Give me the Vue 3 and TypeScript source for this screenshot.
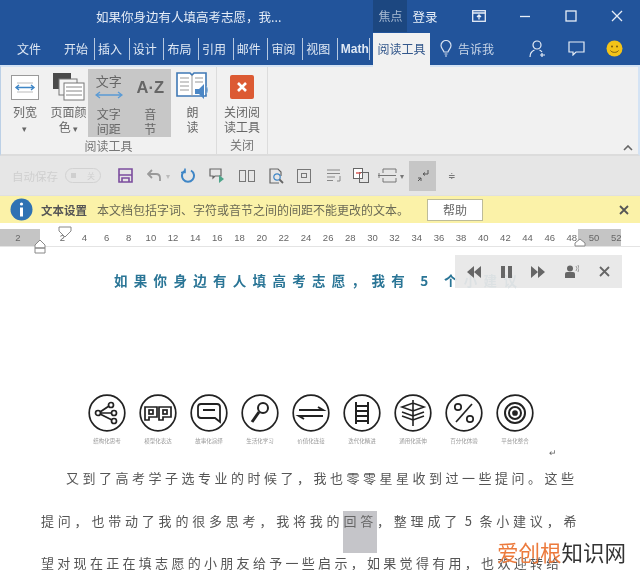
<script setup lang="ts">
const tabs = ['开始', '插入', '设计', '布局', '引用', '邮件', '审阅', '视图', 'Math']
const rulerMarks = ['2', '', ...Array.from({ length: 26 }, (_, i) => String((i + 1) * 2))]
const skills = ['结构化思考', '模型化表达', '故事化演绎', '生活化学习', '价值化连接', '迭代化精进', '通用化延伸', '百分化体验', '平台化整合']
</script>

<template>
  <div class="window">
    <header class="titlebar">
      <div class="doc-name">如果你身边有人填高考志愿，我...</div>
      <div class="focus">焦点</div>
      <div class="login">登录</div>
      <div class="win-btn first">
        <svg width="14" height="12" viewBox="0 0 14 12" fill="none" stroke="#e8eef7" stroke-width="1.3"><rect x=".7" y=".7" width="12.6" height="10.6"/><path d="M.7 3h12.6M7 9.5V5M5 7l2-2 2 2"/></svg>
      </div>
      <div class="win-btn"><svg width="12" height="12" viewBox="0 0 12 12" stroke="#e8eef7" stroke-width="1.3"><path d="M1 6.5h10"/></svg></div>
      <div class="win-btn"><svg width="12" height="12" viewBox="0 0 12 12" fill="none" stroke="#e8eef7" stroke-width="1.3"><rect x="1" y="1" width="10" height="10"/></svg></div>
      <div class="win-btn"><svg width="12" height="12" viewBox="0 0 12 12" stroke="#e8eef7" stroke-width="1.3"><path d="M1 1l10 10M11 1L1 11"/></svg></div>
    </header>

    <nav class="tabbar">
      <div class="file-tab">文件</div>
      <div class="tabs">
        <div v-for="t in tabs" :key="t" class="tab">{{ t }}</div>
      </div>
      <div class="active-tab">阅读工具</div>
      <div class="tell">
        <svg width="12" height="17" viewBox="0 0 12 17" fill="none" stroke="#d5e0f0" stroke-width="1.2"><path d="M4 12C3.500 9.500 1 8.500 1 5.500a5 5 0 0 1 10 0C11 8.500 8.500 9.500 8 12zM4.500 14h3M5 16h2"/></svg>
        <span>告诉我</span>
      </div>
      <div class="tab-icons">
        <svg width="18" height="18" viewBox="0 0 18 18" fill="none" stroke="#e8eef7" stroke-width="1.2"><circle cx="8" cy="5" r="4"/><path d="M1 17c0-4 2-6 4.500-7M10.500 10c1 .4 1.800 1 2.500 2M13 13v4M11 15h5"/></svg>
        <svg width="17" height="15" viewBox="0 0 17 15" fill="none" stroke="#e8eef7" stroke-width="1.2"><path d="M1 1h15v10H8l-3 3v-3H1z"/></svg>
        <svg width="17" height="17" viewBox="0 0 17 17"><circle cx="8.500" cy="8.500" r="8" fill="#f3c318"/><circle cx="6" cy="6.500" r="1" fill="#7a5a10"/><circle cx="11" cy="6.500" r="1" fill="#7a5a10"/><path d="M4.500 10.500c1.500 2.500 6.500 2.500 8 0" fill="none" stroke="#7a5a10"/></svg>
      </div>
    </nav>

    <section class="ribbon">
      <div class="group reading">
        <div class="cmds">
          <div class="cmd w-col">
            <svg width="28" height="25" viewBox="0 0 28 25"><rect x=".5" y=".5" width="27" height="24" fill="#fff" stroke="#9a9a9a"/><path d="M6 8h16M6 17h16" stroke="#bbb"/><path d="M5 12.500h18M8 10l-3 2.500L8 15M20 10l3 2.500-3 2.500" fill="none" stroke="#3f86c6" stroke-width="1.400"/></svg>
            <span class="lbl">列宽<br /><i class="caret">▾</i></span>
          </div>
          <div class="cmd w-color">
            <svg width="32" height="28" viewBox="0 0 32 28"><rect x="0" y="0" width="18" height="16" fill="#4a4a4a"/><rect x="6" y="6" width="18" height="16" fill="#f4f4f4" stroke="#777"/><rect x="11" y="10" width="20" height="17" fill="#fff" stroke="#777"/><path d="M13 14h16M13 18h16M13 22h16" stroke="#888"/></svg>
            <span class="lbl">页面颜<br />色 <i class="caret">▾</i></span>
          </div>
          <div class="selected">
            <div class="cmd w-sel">
              <div class="glyph-wrap">
                <span class="glyph">文字</span>
                <svg width="28" height="8" viewBox="0 0 28 8" fill="none" stroke="#5b9bd5" stroke-width="1.300"><path d="M1 4h26M5 1L1 4l4 3M23 1l4 3-4 3"/></svg>
              </div>
              <span class="lbl">文字<br />间距</span>
            </div>
            <div class="cmd w-sel">
              <div class="az">A·Z</div>
              <span class="lbl">音<br />节</span>
            </div>
          </div>
          <div class="cmd w-read">
            <svg width="33" height="30" viewBox="0 0 33 30"><path d="M1 2h13l2 2 2-2h12v23H1z" fill="#fff" stroke="#3f78b5" stroke-width="1.600"/><path d="M16 4v21M4 7h9M4 11h9M4 15h9M4 19h9M19 7h8M19 11h8" stroke="#999"/><path d="M19 18h4l5-5v15l-5-5h-4z" fill="#4a86c5"/><path d="M30 15c2 2 2 6 0 8" fill="none" stroke="#7fb0dc"/></svg>
            <span class="lbl">朗<br />读</span>
          </div>
        </div>
        <div class="group-name">阅读工具</div>
      </div>
      <div class="group closing">
        <div class="cmds">
          <div class="cmd w-close">
            <svg width="24" height="24" viewBox="0 0 24 24"><rect width="24" height="24" rx="2" fill="#dc5a33"/><path d="M8 8l8 8M16 8l-8 8" stroke="#fff" stroke-width="2.600"/></svg>
            <span class="lbl">关闭阅<br />读工具</span>
          </div>
        </div>
        <div class="group-name">关闭</div>
      </div>
      <svg class="collapse" width="10" height="6" viewBox="0 0 10 6" fill="none" stroke="#666" stroke-width="1.600"><path d="M1 5l4-4 4 4"/></svg>
    </section>

    <section class="toolbar">
      <span class="autosave">自动保存</span>
      <span class="toggle"><i></i><b>关</b></span>
      <svg class="t-save" width="15" height="15" viewBox="0 0 15 15" fill="none" stroke="#7c4d9e" stroke-width="1.600"><path d="M1 1h13v13H1zM1 7h13M4 14v-4h7v4"/></svg>
      <svg class="t-undo" width="15" height="13" viewBox="0 0 15 13" fill="none" stroke="#9a9a9a" stroke-width="1.800"><path d="M5 1L1 5l4 4M1 5h8c3 0 4 2 4 4v3"/></svg>
      <i class="mini-caret c-undo">▾</i>
      <svg class="t-redo" width="15" height="15" viewBox="0 0 15 15" fill="none" stroke="#3f86c6" stroke-width="2"><path d="M10 2.500a6 6 0 1 1-6 0"/><path d="M4 .5v4H0" stroke-width="1.600"/></svg>
      <svg class="t-slide" width="16" height="15" viewBox="0 0 16 15"><path d="M1 1h11v7H6L4 10V8H1z" fill="none" stroke="#666" stroke-width="1.200"/><path d="M10 7l5 4-5 4z" fill="#4da58a"/></svg>
      <svg class="t-pages" width="16" height="12" viewBox="0 0 16 12" fill="none" stroke="#777"><rect x=".5" y=".5" width="6" height="11"/><rect x="9.500" y=".5" width="6" height="11"/></svg>
      <svg class="t-find" width="15" height="16" viewBox="0 0 15 16" fill="none" stroke="#666" stroke-width="1.200"><path d="M10 15H1V1h8l3 3v4"/><circle cx="8" cy="9" r="3.200" stroke="#3f86c6"/><path d="M10.500 11.500L14 15" stroke-width="1.800"/></svg>
      <svg class="t-page" width="14" height="14" viewBox="0 0 14 14" fill="none" stroke="#777"><rect x=".5" y=".5" width="13" height="13"/><rect x="4.500" y="4.500" width="5" height="4"/></svg>
      <svg class="t-lines" width="15" height="14" viewBox="0 0 15 14" fill="none" stroke="#888"><path d="M1 1h13M1 4.500h13M1 8h8M1 11.500h6M14 7v5h-3"/></svg>
      <svg class="t-compare" width="16" height="15" viewBox="0 0 16 15" fill="none" stroke="#666"><rect x=".5" y=".5" width="9" height="10" fill="#fff"/><rect x="6.500" y="4.500" width="9" height="10"/><path d="M3 5h5" stroke="#d9534f" stroke-width="1.400"/></svg>
      <svg class="t-height" width="19" height="15" viewBox="0 0 19 15" fill="none" stroke="#777"><path d="M5 1h13M5 14h13M5 1v4M18 1v4M5 10v4M18 10v4M1 5v5M0 7.500h18" /></svg>
      <i class="mini-caret c-height">▾</i>
      <div class="t-active">
        <svg width="12" height="12" viewBox="0 0 12 12" fill="none" stroke="#555"><path d="M11 0v4H6M8 2.500L6 4l2 1.500M1 11l3-3M4 11V8H1" /></svg>
      </div>
      <i class="mini-caret c-more">≑</i>
    </section>

    <section class="message">
      <svg width="23" height="23" viewBox="0 0 23 23"><circle cx="11.500" cy="11.500" r="11" fill="#2f72b3"/><circle cx="11.500" cy="6" r="1.600" fill="#fff"/><rect x="10" y="9.500" width="3" height="9" fill="#fff"/></svg>
      <strong>文本设置</strong>
      <span class="msg-text">本文档包括字词、字符或音节之间的间距不能更改的文本。</span>
      <div class="help">帮助</div>
      <svg class="msg-close" width="10" height="10" viewBox="0 0 10 10" stroke="#555" stroke-width="1.800"><path d="M1 1l8 8M9 1L1 9"/></svg>
    </section>

    <section class="ruler">
      <span v-for="(m, i) in rulerMarks" :key="i" class="mark">{{ m }}</span>
      <svg class="indent-top" width="14" height="12" viewBox="0 0 14 12"><path d="M1 1h12v4l-6 6-6-6z" fill="#fff" stroke="#888"/></svg>
      <svg class="indent-left" width="12" height="15" viewBox="0 0 12 15"><path d="M1 6l5-5 5 5v3H1zM1 9h10v5H1z" fill="#fff" stroke="#888"/></svg>
      <svg class="indent-right" width="12" height="9" viewBox="0 0 12 9"><path d="M1 8V5l5-4 5 4v3z" fill="#fff" stroke="#888"/></svg>
    </section>

    <main class="page">
      <h1 class="doc-title">如果你身边有人填高考志愿，我有 5 个小建议</h1>

      <div class="skills">
        <div v-for="(s, i) in skills" :key="s" class="skill">
          <svg width="38" height="38" viewBox="0 0 38 38" fill="none" stroke="#222" stroke-width="1.700">
            <circle cx="19" cy="19" r="17.800" />
            <g v-if="i === 0"><circle cx="10" cy="19" r="2.500"/><circle cx="23" cy="11" r="2.500"/><circle cx="26" cy="19" r="2.500"/><circle cx="26" cy="27" r="2.500"/><path d="M12 18l9-6M12.500 19h11M12 20l12 6"/></g>
            <g v-else-if="i === 1"><path d="M6 13h12v10h-8v3H6zM20 13h12v10h-8v3h-4z"/><rect x="10" y="16" width="4" height="4"/><rect x="24" y="16" width="4" height="4"/></g>
            <g v-else-if="i === 2"><path d="M11 10h16q3 0 3 3v15l-5-4H11q-3 0-3-3v-8q0-3 3-3z" stroke-width="1.800"/><path d="M13 16h12" stroke-width="2"/></g>
            <g v-else-if="i === 3"><circle cx="22" cy="14" r="5" stroke-width="2"/><path d="M18 18L11 28" stroke-width="3"/></g>
            <g v-else-if="i === 4"><path d="M7 16h24l-5-3M31 22H7l5 3" stroke-width="2"/></g>
            <g v-else-if="i === 5"><path d="M13 8v22M25 8v22M13 12h12M13 17h12M13 22h12M13 27h12" stroke-width="2"/></g>
            <g v-else-if="i === 6"><path d="M8 13l11-4 11 4-11 4zM8 18l11 4 11-4M8 22l11 4 11-4M19 6v26" stroke-width="1.600"/></g>
            <g v-else-if="i === 7"><circle cx="13" cy="13" r="3.200"/><circle cx="25" cy="25" r="3.200"/><path d="M27 10L11 28"/></g>
            <g v-else><circle cx="19" cy="19" r="10" stroke-width="2"/><circle cx="19" cy="19" r="6" stroke-width="2"/><circle cx="19" cy="19" r="2" fill="#222"/></g>
          </svg>
          <span class="skill-name">{{ s }}</span>
        </div>
      </div>

      <div class="pilcrow">↵</div>

      <article class="body">
        <p class="first">又到了高考学子选专业的时候了，我也零零星星收到过一些提问。这些</p>
        <p class="second">提问，也带动了我的很多思考，我将我的<mark>回答</mark>，整理成了 5 条小建议，希</p>
        <p class="third">望对现在正在填志愿的小朋友给予一些启示，如果觉得有用，也欢迎转给</p>
      </article>

      <aside class="player">
        <svg width="14" height="12" viewBox="0 0 14 12" fill="#666"><path d="M7 0v12L0 6zM14 0v12L7 6z"/></svg>
        <svg width="11" height="12" viewBox="0 0 11 12" fill="#666"><rect width="4" height="12"/><rect x="7" width="4" height="12"/></svg>
        <svg width="14" height="12" viewBox="0 0 14 12" fill="#666"><path d="M0 0v12l7-6zM7 0v12l7-6z"/></svg>
        <svg width="14" height="13" viewBox="0 0 14 13" fill="#666"><circle cx="5" cy="3.500" r="3"/><path d="M0 13V9q0-2 2-2h6q2 0 2 2v4z"/><path d="M11 1q2 2 0 5M13 0q2 3 0 7" fill="none" stroke="#888" stroke-width=".8"/></svg>
        <svg width="11" height="11" viewBox="0 0 11 11" stroke="#666" stroke-width="1.800"><path d="M1 1l9 9M10 1l-9 9"/></svg>
      </aside>
    </main>

    <div class="watermark"><span class="wm-a">爱创根</span><span class="wm-b">知识网</span></div>
  </div>
</template>

<style scoped>
.window {
  position: relative;
  width: 640px;
  height: 570px;
  overflow: hidden;
  background: #fff;
  font-family: "Noto Sans CJK SC", "Liberation Sans", sans-serif;
  font-size: 12px;
  color: #666;
  filter: blur(0.45px);
}
.titlebar {
  display: flex;
  align-items: center;
  height: 32px;
  background: #22549b;
  color: #e6edf7;
}
.doc-name { margin-left: 96px; width: 278px; font-size: 12.500px; white-space: nowrap; }
.focus {
  width: 34px;
  height: 32px;
  line-height: 32px;
  text-align: center;
  background: #1c4780;
  color: #a9bcd4;
}
.login { margin-left: 5px; width: 26px; font-size: 12.500px; }
.win-btn { width: 46px; display: flex; justify-content: center; }
.win-btn.first { margin-left: 18px; }
.tabbar {
  display: flex;
  align-items: center;
  height: 33px;
  background: #22549b;
  color: #dfe8f4;
}
.file-tab { margin-left: 17px; width: 47px; }
.tabs { display: flex; width: 309px; }
.tab {
  flex: none;
  width: 34.700px;
  height: 22px;
  line-height: 22px;
  padding-right: 6px;
  box-sizing: border-box;
  border-right: 1px solid #b6c8e0;
  white-space: nowrap;
  text-align: left;
  padding-left: 3px;
}
.tab:first-child { width: 31px; padding-left: 0; }
.tab:last-child { width: 32px; overflow: hidden; font-weight: 700; padding-right: 0; font-family: "Liberation Sans", sans-serif; }
.active-tab {
  align-self: flex-end;
  width: 57px;
  height: 34px;
  margin-bottom: -2px;
  line-height: 31px;
  text-align: center;
  background: #f1f1f1;
  color: #34588c;
  position: relative;
  z-index: 1;
}
.tell { display: flex; align-items: center; gap: 6px; margin-left: 10px; width: 89px; color: #c9d6e8; }
.tab-icons { display: flex; align-items: center; gap: 21px; }
.ribbon {
  position: relative;
  display: flex;
  height: 91px;
  box-sizing: border-box;
  background: #f1f1f1;
  border-top: 2px solid #d4e3f4;
  border-left: 1px solid #bcd0e6;
  border-right: 2px solid #d4e3f4;
  border-bottom: 2px solid #dcdcdc;
}
.group {
  display: flex;
  flex-direction: column;
  padding-top: 2px;
  border-right: 1px solid #dcdcdc;
}
.reading { width: 215px; }
.closing { width: 50px; }
.cmds { display: flex; height: 69px; }
.group-name { text-align: center; font-size: 12px; line-height: 18px; color: #777; }
.cmd {
  display: flex;
  flex-direction: column;
  align-items: center;
  gap: 5px;
  padding-top: 6px;
  box-sizing: border-box;
  text-align: center;
}
.cmd svg { flex: none; }
.cmd .lbl { line-height: 15px; font-size: 12px; color: #666; }
.caret { font-style: normal; font-size: 9px; }
.w-col { width: 48px; gap: 4px; padding-top: 6px; }
.w-color { width: 39px; gap: 3px; padding-top: 4px; }
.selected { display: flex; background: #c7c7c7; width: 83px; height: 68px; }
.w-sel { width: 41.500px; gap: 3px; padding-top: 2px; }
.glyph-wrap { display: flex; flex-direction: column; align-items: center; height: 32px; }
.glyph { font-size: 13px; line-height: 20px; color: #666; }
.az { font-family: "Liberation Sans", sans-serif; font-weight: 700; font-size: 16.500px; color: #666; height: 32px; line-height: 32px; }
.w-read { width: 43px; gap: 3px; padding-top: 2px; }
.w-close { width: 50px; gap: 5px; padding-top: 6px; }
.collapse { position: absolute; right: 5px; bottom: 3px; }
.toolbar {
  position: relative;
  height: 39px;
  background: #e6e6e6;
  border-bottom: 1px solid #e0e0e0;
  display: flex;
  align-items: center;
}
.toolbar > svg { flex: none; }
.autosave { margin-left: 12px; color: #cfcfcf; font-size: 11.500px; width: 53px; white-space: nowrap; }
.toggle {
  width: 36px; height: 15px; box-sizing: border-box;
  border: 1px solid #d2d2d2; border-radius: 8px;
  display: flex; align-items: center; justify-content: space-between;
  padding: 0 5px; font-size: 8px; color: #d0d0d0;
}
.toggle i { width: 5px; height: 5px; background: #cfcfcf; display: block; }
.toggle b { font-weight: 400; }
.t-save { margin-left: 17px; }
.t-undo { margin-left: 14px; }
.mini-caret { font-style: normal; font-size: 8px; color: #777; }
.c-undo { margin-left: 4px; color: #bbb; width: 10px; }
.t-redo { margin-left: 5px; }
.t-slide { margin-left: 13px; }
.t-pages { margin-left: 14px; }
.t-find { margin-left: 14px; }
.t-page { margin-left: 13px; }
.t-lines { margin-left: 15px; }
.t-compare { margin-left: 12px; }
.t-height { margin-left: 9px; }
.c-height { margin-left: 3px; width: 9px; }
.t-active {
  width: 27px; height: 30px; background: #c6c6c6;
  display: flex; align-items: center; justify-content: center;
}
.c-more { margin-left: 12px; font-size: 9px; }
.message {
  display: flex;
  align-items: center;
  height: 27px;
  padding-left: 10px;
  background: #fbf2a8;
  font-size: 12px;
  color: #6b6a55;
  position: relative;
}
.message strong { margin-left: 8px; color: #555; font-weight: 700; font-size: 11.500px; }
.msg-text { margin-left: 10px; width: 330px; white-space: nowrap; }
.help {
  width: 56px; height: 22px; line-height: 20px; box-sizing: border-box;
  text-align: center; background: #fff; border: 1px solid #bdbc9a; color: #666; font-size: 12px;
}
.msg-close { position: absolute; right: 11px; top: 9px; }
.ruler {
  position: relative;
  margin-top: 6px;
  height: 17px;
  display: flex;
  align-items: center;
  padding-left: 6.900px;
  border-bottom: 1px solid #e4e4e4;
  background: linear-gradient(90deg, #c5c5c5 40px, #fff 40px, #fff 578px, #c5c5c5 578px, #c5c5c5 621px, #fff 621px);
}
.mark {
  flex: none;
  width: 22.160px;
  text-align: center;
  font-family: "Liberation Sans", sans-serif;
  font-size: 9.500px;
  color: #666;
}
.indent-top { position: absolute; left: 58px; top: -3px; }
.indent-left { position: absolute; left: 34px; top: 10px; }
.indent-right { position: absolute; left: 574px; top: 9px; }
.page { position: relative; height: 325px; }
.doc-title {
  margin: 0;
  padding: 23px 0 0 114px;
  font-size: 13.500px;
  line-height: 20px;
  font-weight: 700;
  letter-spacing: 6.300px;
  color: #2a7596;
  white-space: nowrap;
}
.skills { display: flex; padding: 104px 0 0 81.500px; }
.skill { width: 51px; display: flex; flex-direction: column; align-items: center; }
.skill-name { font-size: 5.500px; line-height: 8px; margin-top: 5px; color: #999; white-space: nowrap; }
.pilcrow { position: absolute; left: 549px; top: 201px; font-size: 9px; line-height: 10px; color: #666; }
.body { padding: 12px 0 0 41px; }
.body p {
  margin: 0;
  font-size: 13px;
  line-height: 42.500px;
  height: 42.500px;
  color: #555;
  white-space: nowrap;
}
.body p.first { padding-left: 25px; letter-spacing: 3.500px; }
.body p.second { letter-spacing: 3.800px; word-spacing: -3px; }
.body p.third { letter-spacing: 3.300px; }
.body mark { display: inline-block; line-height: 20px; padding-bottom: 22px; background: #c5c5c9; color: #666; }
.player {
  position: absolute;
  left: 455px;
  top: 8px;
  width: 167px;
  height: 33px;
  background: rgba(232, 232, 232, .94);
  display: flex;
  align-items: center;
  justify-content: space-around;
  padding: 0 2px;
  box-sizing: border-box;
}
.watermark {
  position: absolute;
  left: 497px;
  bottom: 5px;
  font-size: 21.500px;
  line-height: 26px;
  white-space: nowrap;
}
.wm-a { color: #ec7a3c; }
.wm-b { color: #333; }
</style>
